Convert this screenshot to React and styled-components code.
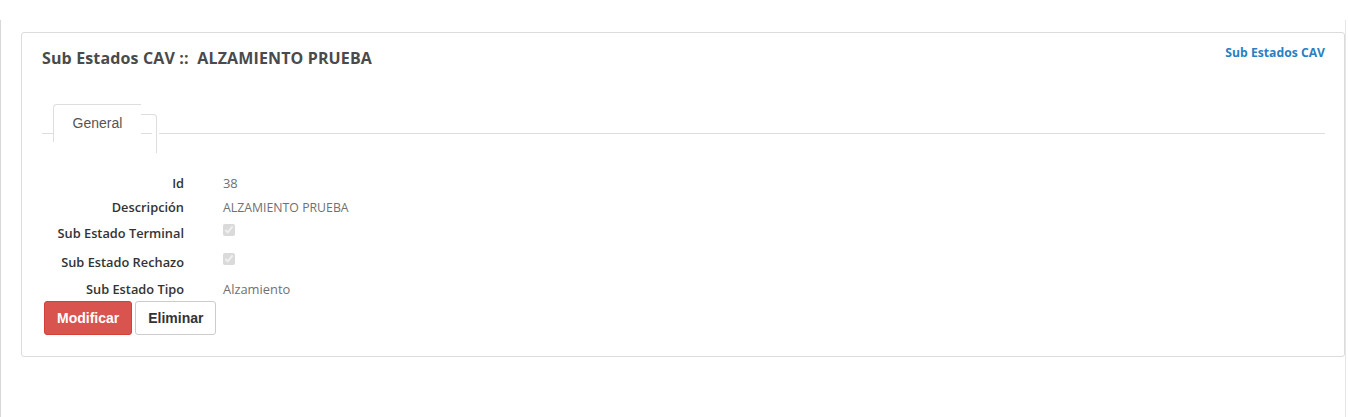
import styled, { createGlobalStyle } from 'styled-components';

const GlobalStyle = createGlobalStyle`
    html, body {
        margin: 0;
        padding: 0;
        background: #fff;
    }
    body {
        font-family: "Open Sans", "Liberation Sans", sans-serif;
    }
`;

const Page = styled.div`
    width: 1346px;
    min-height: 417px;
    border-right: 1px solid #e6e6e6;
    box-sizing: border-box;
`;

const Content = styled.div`
    margin-top: 20px;
    min-height: 397px;
    border-left: 1px solid #d8d8d8;
    padding: 12px 0 0 20px;
    box-sizing: border-box;
`;

const Card = styled.div`
    width: 1324px;
    box-sizing: border-box;
    border: 1px solid #dcdcdc;
    border-radius: 3px;
    padding: 15px 19px 21px 20px;
`;

const Header = styled.div`
    display: flex;
    justify-content: space-between;
    align-items: flex-start;
`;

const Title = styled.h2`
    margin: 0;
    font-size: 16px;
    line-height: 20px;
    font-weight: 700;
    letter-spacing: 0.14px;
    color: #4a4a4a;
    white-space: pre;
`;

const Crumb = styled.a`
    font-size: 12.2px;
    line-height: 14px;
    font-weight: 700;
    color: #2a7fbf;
    text-decoration: none;
    margin-top: -2px;
`;

const TabRow = styled.div`
    display: flex;
    align-items: flex-start;
    margin-top: 36px;
    height: 49px;
`;

const TabLine = styled.div`
    height: 29px;
    border-bottom: 1px solid #dedede;
    width: ${p => p.$width || 'auto'};
    flex: ${p => (p.$grow ? 1 : 'none')};
    margin-left: ${p => p.$offset || 0};
`;

const Tab = styled.div`
    width: 88px;
    height: 38px;
    border-left: 1px solid #dedede;
    border-top: 1px solid #dedede;
    border-top-left-radius: 4px;
    font-family: "Liberation Sans", Arial, sans-serif;
    font-size: 14px;
    color: #555;
    text-align: center;
    padding-top: 10px;
    box-sizing: border-box;
`;

const TabCap = styled.div`
    width: 16px;
    height: 39px;
    margin-top: 10px;
    border-top: 1px solid #dedede;
    border-right: 1px solid #dedede;
    border-top-right-radius: 4px;
    box-sizing: border-box;
    background-image: linear-gradient(#dedede, #dedede);
    background-size: 11px 1px;
    background-position: 0 18px;
    background-repeat: no-repeat;
`;

const Form = styled.div`
    margin-top: 18px;
`;

const Row = styled.div`
    display: grid;
    grid-template-columns: 142px 1fr;
    column-gap: 39px;
    align-items: center;
    height: ${p => p.$h}px;
`;

const Label = styled.div`
    text-align: right;
    font-size: 12.8px;
    font-weight: 600;
    color: #333;
`;

const Value = styled.div`
    font-size: ${p => (p.$small ? '12.3px' : '12.9px')};
    color: #707070;
`;

const Check = styled.input`
    margin: 0;
    width: 12px;
    height: 12px;
    position: relative;
    top: ${p => p.$lift || 0}px;
    opacity: 0.8;
`;

const Actions = styled.div`
    display: flex;
    gap: 3px;
    margin-left: 2px;
`;

const Button = styled.button`
    height: 34px;
    padding: 0 12px;
    border-radius: 3px;
    font-family: "Liberation Sans", Arial, sans-serif;
    font-size: 14px;
    font-weight: 700;
    cursor: pointer;
    color: ${p => (p.$danger ? '#fff' : '#333')};
    background: ${p => (p.$danger ? '#d9534f' : '#fff')};
    border: 1px solid ${p => (p.$danger ? '#d43f3a' : '#ccc')};
`;

const rows = [
    { label: 'Id', value: '38', h: 24 },
    { label: 'Descripción', value: 'ALZAMIENTO PRUEBA', h: 24, small: true },
    { label: 'Sub Estado Terminal', check: true, h: 28, lift: -3 },
    { label: 'Sub Estado Rechazo', check: true, h: 30, lift: -3 },
    { label: 'Sub Estado Tipo', value: 'Alzamiento', h: 24 },
];

const App = () => {
    return (
        <>
            <GlobalStyle />
            <Page>
                <Content>
                    <Card>
                        <Header>
                            <Title>Sub Estados CAV ::  ALZAMIENTO PRUEBA</Title>
                            <Crumb href="#">Sub Estados CAV</Crumb>
                        </Header>
                        <TabRow>
                            <TabLine $width="11px" />
                            <Tab>General</Tab>
                            <TabCap />
                            <TabLine $grow $offset="2px" />
                        </TabRow>
                        <Form>
                            {rows.map(r => (
                                <Row key={r.label} $h={r.h}>
                                    <Label>{r.label}</Label>
                                    {r.check ? (
                                        <div>
                                            <Check type="checkbox" checked disabled readOnly $lift={r.lift} />
                                        </div>
                                    ) : (
                                        <Value $small={r.small}>{r.value}</Value>
                                    )}
                                </Row>
                            ))}
                            <Actions>
                                <Button $danger>Modificar</Button>
                                <Button>Eliminar</Button>
                            </Actions>
                        </Form>
                    </Card>
                </Content>
            </Page>
        </>
    );
};

export default App;
